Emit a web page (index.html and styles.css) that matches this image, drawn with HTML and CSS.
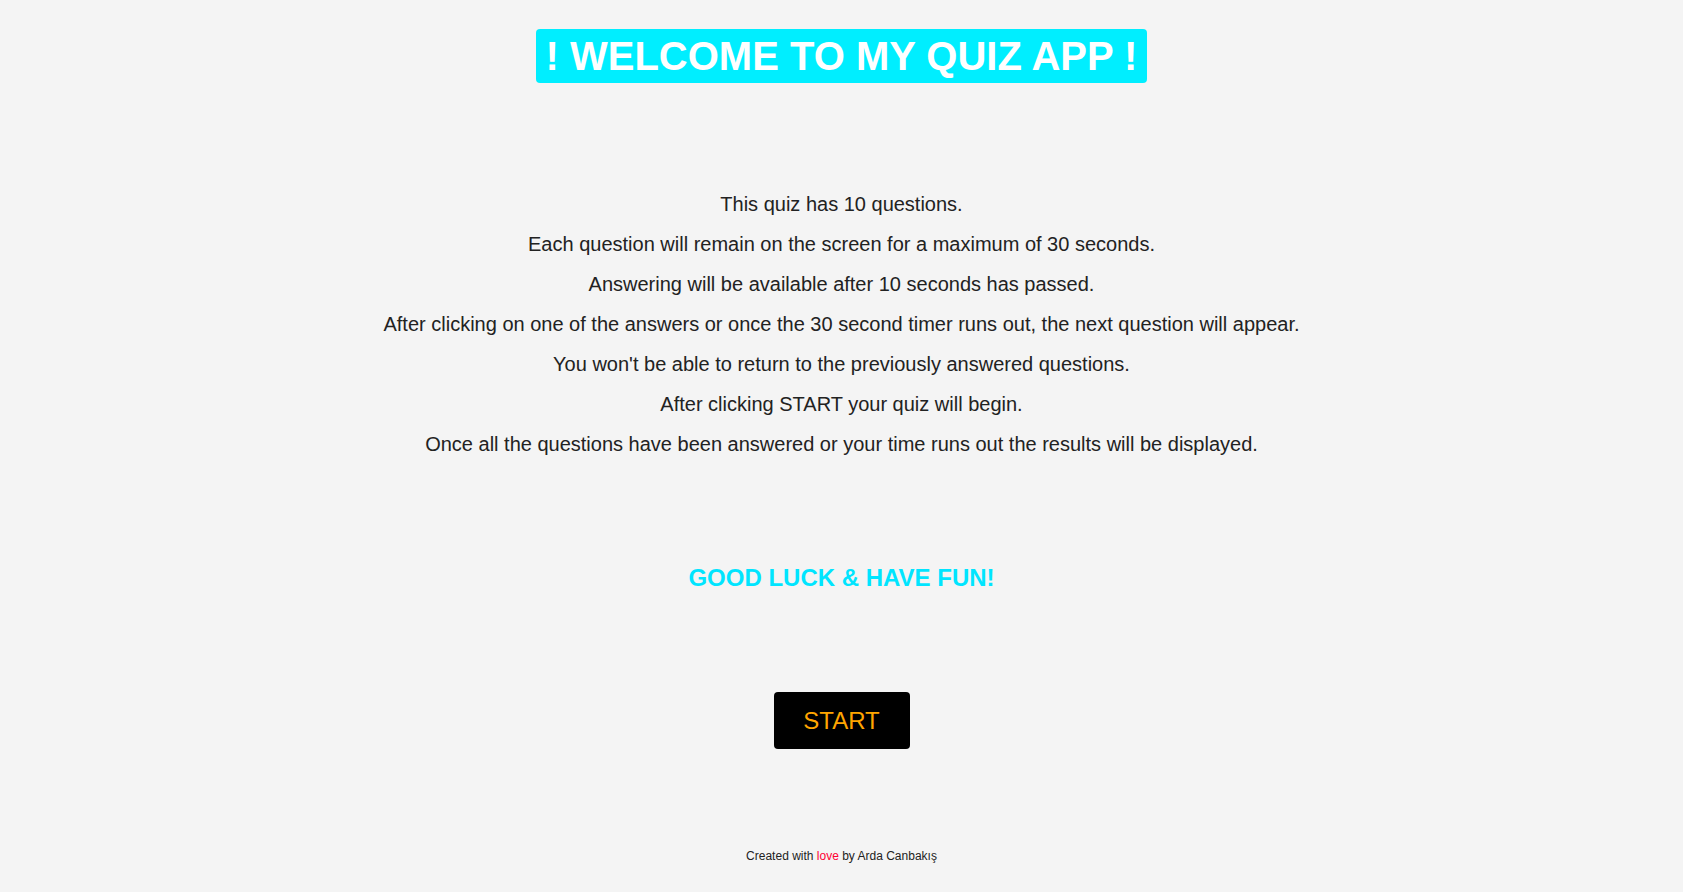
FILE: index.html
```html
<!DOCTYPE html>
<html lang="en">
<head>
<meta charset="utf-8">
<title>Quiz App</title>
<link rel="stylesheet" href="styles.css">
</head>
<body>
<div class="page">
  <header class="header">
    <h1 class="title">! WELCOME TO MY QUIZ APP !</h1>
  </header>
  <section class="rules">
    <p class="rule">This quiz has 10 questions.</p>
    <p class="rule">Each question will remain on the screen for a maximum of 30 seconds.</p>
    <p class="rule">Answering will be available after 10 seconds has passed.</p>
    <p class="rule">After clicking on one of the answers or once the 30 second timer runs out, the next question will appear.</p>
    <p class="rule">You won't be able to return to the previously answered questions.</p>
    <p class="rule">After clicking START your quiz will begin.</p>
    <p class="rule">Once all the questions have been answered or your time runs out the results will be displayed.</p>
  </section>
  <h2 class="luck">GOOD LUCK &amp; HAVE FUN!</h2>
  <button class="start">START</button>
  <footer class="footer">Created with <span class="love">love</span> by Arda Canbakış</footer>
</div>
</body>
</html>
```
FILE: styles.css
```css
html, body {
  margin: 0;
  padding: 0;
  background: #f4f4f4;
  font-family: "Liberation Sans", Arial, sans-serif;
  color: #222;
}
.page {
  display: flex;
  flex-direction: column;
  align-items: center;
  min-height: 892px;
}
.header {
  padding-top: 29px;
}
.title {
  margin: 0;
  background: #00eeff;
  color: #fff;
  font-size: 40px;
  font-weight: bold;
  line-height: 54px;
  padding: 0 10px;
  border-radius: 4px;
}
.rules {
  margin-top: 110px;
  text-align: center;
}
.rule {
  margin: 0 0 17px;
  font-size: 20px;
  line-height: 23px;
}
.luck {
  margin: 91px 0 0;
  color: #00e5ff;
  font-size: 24px;
  font-weight: bold;
}
.start {
  margin-top: 100px;
  width: 136px;
  height: 57px;
  background: #000;
  color: #ffa500;
  border: none;
  border-radius: 4px;
  font-family: "Liberation Sans", Arial, sans-serif;
  font-size: 24px;
}
.footer {
  margin-top: 100px;
  font-size: 12px;
}
.love {
  color: #ff0033;
}
```
